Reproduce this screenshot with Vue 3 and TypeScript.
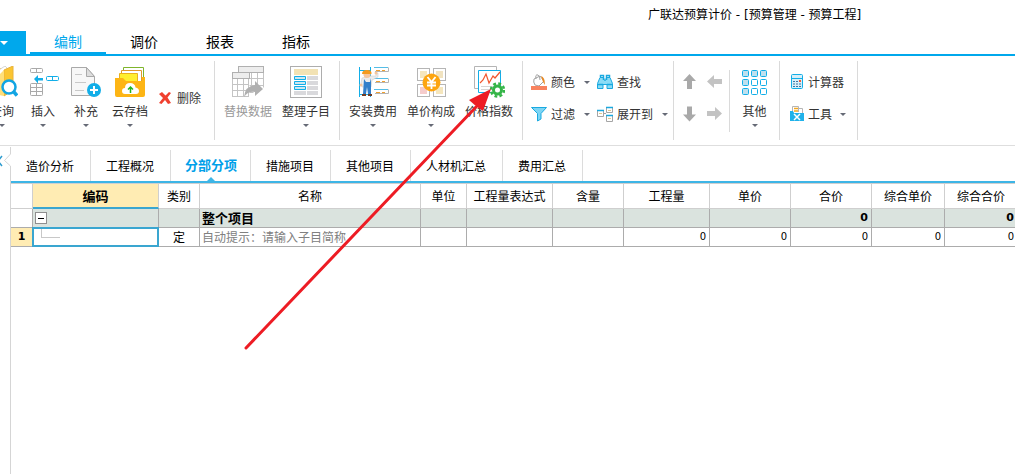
<script setup lang="ts">
import { ref } from 'vue'

interface Column {
  label: string
  width?: number
}

const menus: string[] = ['编制', '调价', '报表', '指标']
const activeMenu = ref('编制')

const sheets: string[] = ['造价分析', '工程概况', '分部分项', '措施项目', '其他项目', '人材机汇总', '费用汇总']
const activeSheet = ref('分部分项')

const columns: Column[] = [
  { label: '编码', width: 126 },
  { label: '类别', width: 41 },
  { label: '名称' },
  { label: '单位', width: 46 },
  { label: '工程量表达式', width: 86 },
  { label: '含量', width: 71 },
  { label: '工程量', width: 86 },
  { label: '单价', width: 81 },
  { label: '合价', width: 81 },
  { label: '综合单价', width: 73 },
  { label: '综合合价', width: 73 },
]

const totals: string[] = ['', '', '', '', '', '0', '', '0']
const amounts: string[] = ['', '', '', '0', '0', '0', '0', '0']
const code = ref('')
</script>

<template>
  <div class="app">
    <header class="titlebar">广联达预算计价 - [预算管理 - 预算工程]</header>

    <nav class="menubar">
      <button class="file" type="button" aria-label="文件"><i class="caret light"></i></button>
      <button
        v-for="m in menus"
        :key="m"
        type="button"
        class="menu"
        :class="{ active: m === activeMenu }"
        @click="activeMenu = m"
      >{{ m }}</button>
    </nav>

    <section class="ribbon">
      <div class="group first">
        <button type="button" class="big w42">
          <svg width="32" height="32" viewBox="0 0 32 32">
            <path d="M10 2h8v27h-8z" fill="#f5c242" />
            <path d="M10 6 19 0l2 2-6 26h-5z" fill="#fff" stroke="#d5d5d5" />
            <path d="M18 4l9-4v24l-9 6z" fill="#fbc531" stroke="#e8b23a" />
            <path d="M12 10l6-6v26l-6-1z" fill="#ffdf7a" />
            <circle cx="23" cy="21" r="6.5" fill="#fff" stroke="#12a5e3" stroke-width="2.5" />
            <path d="M27.500 25.500l3.500 4" stroke="#12a5e3" stroke-width="3.500" />
          </svg>
          <span>查询</span><i class="caret"></i>
        </button>
        <button type="button" class="big w40">
          <svg width="32" height="32" viewBox="0 0 32 32" fill="none">
            <g stroke="#a9a9a9">
              <rect x="3.5" y="2.500" width="12" height="4" rx="1" /><path d="M9.500 2.500v4" />
              <rect x="3.5" y="17.500" width="12" height="12" rx="1" /><path d="M9.500 17.500v12M3.500 21.500h12M3.500 25.500h12" />
            </g>
            <path d="M7 13l4-4v3h5v2.500h-5v3z" fill="#12aee8" />
            <rect x="19.500" y="10.500" width="12" height="4" rx="1" stroke="#12aee8" /><path d="M25.500 10.500v4" stroke="#12aee8" />
          </svg>
          <span>插入</span><i class="caret"></i>
        </button>
        <button type="button" class="big w46">
          <svg width="32" height="32" viewBox="0 0 32 32">
            <path d="M1.500 1.500h15l8 9v19h-23z" fill="#f7f7f7" stroke="#a9a9a9" />
            <path d="M16.500 1.500v9h8z" fill="#ddd" stroke="#a9a9a9" />
            <path d="M5 8.500h7M5 16.500h11M5 24.500h9" stroke="#c8c8c8" />
            <circle cx="24" cy="24" r="7" fill="#12aee8" />
            <path d="M24 20v8M20 24h8" stroke="#fff" stroke-width="2" />
          </svg>
          <span>补充</span><i class="caret"></i>
        </button>
        <button type="button" class="big w42">
          <svg width="32" height="32" viewBox="0 0 32 32">
            <path d="M9.500 16V1.500h20V16z" fill="#fff" stroke="#7fb52c" />
            <path d="M7.500 16V4.500h20V16z" fill="#fff" stroke="#e29a2a" />
            <path d="M5.500 16V7.500h18V16z" fill="#ffef2e" stroke="#e8b11f" />
            <path d="M1 12h8l3 3h16V11h3v18q0 2-2 2H3q-2 0-2-2z" fill="#fdb515" />
            <path d="M11 28q-3 0-3-3t3-3q0-5 5-5t5.500 4.500Q25 22 25 25t-3 3z" fill="#fff" />
            <path d="M16.500 27v-6M14 23.500l2.500-2.500 2.500 2.500" fill="none" stroke="#22b422" stroke-width="1.500" />
          </svg>
          <span>云存档</span><i class="caret"></i>
        </button>
        <button type="button" class="small remove">
          <svg width="12" height="12" viewBox="0 0 12 12">
            <path d="M0 2l3-2 3.500 3.500L10 0l2 1-3.500 4.500L12 11l-3 1-3-4-3.500 4L0 11l4-5z" fill="#f0402f" />
          </svg>
          <span>删除</span>
        </button>
      </div>

      <div class="group pad">
        <button type="button" class="big w58" disabled>
          <svg width="32" height="32" viewBox="0 0 32 32" fill="none">
            <path d="M17.500 12.500h14M17.500 19.500h14M17.500 26.500h4M19.500 6.500v14M25.500 6.500v12M31.500 6.500v15" stroke="#c4c4c4" />
            <rect x="6.500" y=".5" width="25" height="6" fill="#ededed" stroke="#b0b0b0" />
            <rect x=".5" y="12.500" width="16" height="18" fill="#fff" stroke="#c4c4c4" />
            <path d="M5.500 13v17M11.500 13v17M.5 18.500h16M.5 24.500h16" stroke="#c4c4c4" />
            <rect x=".5" y="6.500" width="17" height="6" fill="#ededed" stroke="#b0b0b0" />
            <path d="M12 31q1-11 11-12v-4l8 8-8 7v-4q-7-1-11 5z" fill="#b0b0b0" />
          </svg>
          <span>替换数据</span>
        </button>
        <button type="button" class="big w58">
          <svg width="32" height="32" viewBox="0 0 32 32">
            <rect x=".5" y=".5" width="31" height="31" fill="#fff" stroke="#adadad" />
            <path d="M4 3h24v6H4z" fill="#f2e2b4" />
            <path d="M17 10h11v4H17zM17 15h11v4H17zM17 20h11v4H17zM17 25h11v4H17zM4 25h12v4H4z" fill="#d9d9dc" />
            <path d="M4.500 10.500h11v3h-11zM4.500 15.500h11v3h-11zM4.500 20.500h11v3h-11z" fill="#cde6f0" stroke="#12aee8" />
          </svg>
          <span>整理子目</span><i class="caret"></i>
        </button>
      </div>

      <div class="group pad">
        <button type="button" class="big w58">
          <svg width="32" height="32" viewBox="0 0 32 32" fill="none">
            <path d="M2.500 1v30M13.500 1v30M2.500 4.500h11M2.500 28.500h11" stroke="#12aee8" />
            <path d="M18 5.500h13.500v-4M18 16.500h13.500v-4M18 27.500h13.500v-4" stroke="#b5b5b5" />
            <path d="M17 1.500h14M14 12.500h17M17 23.500h14" stroke="#55bde6" />
            <path d="M19 4.500h4m2 0h3M19 15.500h4m2 0h3M19 26.500h4m2 0h3" stroke="#f0a030" />
            <path d="M5 12l9-2 5 0v-3h2v4l-6 3-1 7H5l-1-4z" fill="#ececec" stroke="#c5c5c5" stroke-width=".5" />
            <circle cx="10" cy="8.500" r="3.500" fill="#f6c59b" />
            <path d="M5 8q0-4 5-4t4.500 4z" fill="#f59a1c" />
            <path d="M7 13l2 3h4l1-4v16h-3l-1-7-1 7H6z" fill="#327fca" />
            <path d="M5 28h4v2H5zM11 28h4v2h-4z" fill="#713b22" />
            <circle cx="4" cy="19" r="1.500" fill="#f6c59b" /><circle cx="19" cy="7" r="1.500" fill="#f6c59b" />
          </svg>
          <span>安装费用</span><i class="caret"></i>
        </button>
        <button type="button" class="big w58">
          <svg width="32" height="32" viewBox="0 0 32 32">
            <g fill="#fff" stroke="#b5b5b5">
              <rect x="2.500" y="2.500" width="12" height="12" /><rect x="18.500" y="2.500" width="12" height="12" />
              <rect x="2.500" y="18.500" width="12" height="12" /><rect x="18.500" y="18.500" width="12" height="12" />
            </g>
            <path d="M5 5h7v7H5zM21 21h7v7h-7z" fill="#f5e6bd" />
            <path d="M21 5h7v7h-7z" fill="#f1e3c0" /><path d="M5 21h7v7H5z" fill="#f5cccc" />
            <circle cx="16.500" cy="16.500" r="9" fill="#fda50f" />
            <path d="M12.500 11l4 5 4-5M16.500 16v7M12 16.500h9M12 19.500h9" fill="none" stroke="#fff" stroke-width="1.800" />
          </svg>
          <span>单价构成</span><i class="caret"></i>
        </button>
        <button type="button" class="big w58">
          <svg width="32" height="32" viewBox="0 0 32 32">
            <path d="M1.500.5h22v22h-22z" fill="#fff" stroke="#b5b5b5" />
            <path d="M5.500 4.500h22v22h-22z" fill="#fff" stroke="#12aee8" />
            <path d="M8 23.500h17M8 20.500h12" stroke="#d5d5d5" />
            <path d="M7 17l3-3 3-6 3 9 4-7 2 2 5-6" fill="none" stroke="#f2552c" stroke-width="1.200" />
            <circle cx="24.500" cy="24" r="6.500" fill="none" stroke="#35b548" stroke-width="2.500" stroke-dasharray="2.800 2.300" />
            <circle cx="24.500" cy="24" r="4" fill="#fff" stroke="#35b548" stroke-width="3" />
          </svg>
          <span>价格指数</span>
        </button>
      </div>

      <div class="group tools">
        <button type="button" class="small">
          <svg width="16" height="16" viewBox="0 0 16 16">
            <path d="M3 5l6-3 4 5-5 5-4-1q-2-3-1-6z" fill="#fff" stroke="#a2a2a2" /><path d="M5 5q-1-5 2-4 2 1 2 5" fill="none" stroke="#a2a2a2" />
            <path d="M10 2q4 1 4 9l-2-3z" fill="#e88a24" />
            <path d="M0 12h16v4H0z" fill="#f8825e" />
          </svg>
          <span>颜色</span><i class="caret"></i>
        </button>
        <button type="button" class="small">
          <svg width="16" height="16" viewBox="0 0 16 16">
            <path d="M.5 9.500l2.500-6h3.500l1 3h1l1-3H13l2.500 6v5h-5.500v-4H6v4H.5z" fill="#8bdcf6" stroke="#19a9e0" />
            <path d="M3.500 3V1.500h3V6M9.500 6V1.500h3V3M1 10.500h5M10 10.500h5" fill="none" stroke="#19a9e0" stroke-width="1.500" />
          </svg>
          <span>查找</span>
        </button>
        <button type="button" class="small">
          <svg width="16" height="16" viewBox="0 0 16 16">
            <path d="M.5 1.500h15l-5.500 6v5.500l-3.500 2V7.500z" fill="#7dd5f4" stroke="#19a9e0" />
          </svg>
          <span>过滤</span><i class="caret"></i>
        </button>
        <button type="button" class="small">
          <svg width="16" height="16" viewBox="0 0 16 16" fill="#fff">
            <path d="M.5 4.500h6v6h-6zM9.500 1.500h6v5h-6zM9.500 9.500h6v6h-6z" stroke="#a5a5a5" />
            <path d="M0 4.500h7M9 1.500h7M9 9.500h7" stroke="#19a9e0" stroke-width="1.500" />
            <path d="M2 7.500h3M11 4.500h3M11 12.500h3" stroke="#e2c98c" /><path d="M7 7.500h2" stroke="#a5a5a5" />
          </svg>
          <span>展开到</span><i class="caret"></i>
        </button>
      </div>

      <div class="group arrows short">
        <button type="button" aria-label="上移"><svg width="15" height="16" viewBox="0 0 15 16"><path d="M7.500 0l6.500 7h-4v8H5V7H1z" fill="#a9a9a9" /></svg></button>
        <button type="button" aria-label="升级"><svg width="15" height="16" viewBox="0 0 15 16"><path d="M0 7.500L7 1v4h8v5H7v4z" fill="#c3c3c3" /></svg></button>
        <button type="button" aria-label="下移"><svg width="15" height="16" viewBox="0 0 15 16"><path d="M7.500 15.500l6.500-7h-4v-8H5v8H1z" fill="#a9a9a9" /></svg></button>
        <button type="button" aria-label="降级"><svg width="15" height="16" viewBox="0 0 15 16"><path d="M15 7.500L8 1v4H0v5h8v4z" fill="#c3c3c3" /></svg></button>
      </div>

      <div class="group">
        <button type="button" class="big w49">
          <svg width="32" height="32" viewBox="0 0 32 32" fill="#fff" stroke="#12aee8">
            <g fill="#bfe0ee">
              <rect x="3.500" y="4.500" width="6" height="6" rx="1" /><rect x="12.500" y="4.500" width="6" height="6" rx="1" /><rect x="21.500" y="4.500" width="6" height="6" rx="1" />
              <rect x="3.500" y="13.500" width="6" height="6" rx="1" /><rect x="3.500" y="22.500" width="6" height="6" rx="1" />
            </g>
            <rect x="12.500" y="13.500" width="6" height="6" rx="1" /><rect x="21.500" y="13.500" width="6" height="6" rx="1" />
            <rect x="12.500" y="22.500" width="6" height="6" rx="1" /><rect x="21.500" y="22.500" width="6" height="6" rx="1" />
          </svg>
          <span>其他</span><i class="caret"></i>
        </button>
      </div>

      <div class="group stack">
        <button type="button" class="small">
          <svg width="16" height="16" viewBox="0 0 16 16">
            <rect x="2.500" y=".5" width="11" height="14" rx="1" fill="#d7eff8" stroke="#12aee8" />
            <path d="M3 4.500h10" stroke="#12aee8" />
            <path d="M4 7.500h2m1 0h2M4 10h2m1 0h2m1 0h2M4 12.500h2m1 0h2m1 0h2" stroke="#3c75a8" /><path d="M10 7h2" stroke="#ef5a3a" stroke-width="2" />
          </svg>
          <span>计算器</span>
        </button>
        <button type="button" class="small">
          <svg width="16" height="16" viewBox="0 0 16 16">
            <path d="M3.500 6V.5h6V6M9.500 2.500h4V7" fill="#fff" stroke="#b5b5b5" />
            <path d="M5 2.500h4M5 5h4" stroke="#f5a81c" stroke-width="1.500" />
            <path d="M1 5h3l1 2h10v8H1z" fill="#20b2ea" />
            <path d="M5 8l6 6M11 8l-6 6" stroke="#fff" stroke-width="1.500" />
          </svg>
          <span>工具</span><i class="caret"></i>
        </button>
      </div>
    </section>

    <main class="work">
      <aside class="gutter">
        <svg width="11" height="26" viewBox="0 0 11 26" fill="none">
          <path d="M10.500 1v7L4.500 14.500l6 5.500v6" stroke="#d5d5d5" />
          <path d="M-2 15l4-5M-2 15l4 5" stroke="#2d9ccf" stroke-width="1.500" />
        </svg>
        <div class="rail"></div>
      </aside>

      <div class="content">
        <div class="sheets" role="tablist">
          <button
            v-for="s in sheets"
            :key="s"
            type="button"
            role="tab"
            :aria-selected="s === activeSheet"
            :class="{ active: s === activeSheet }"
            @click="activeSheet = s"
          >{{ s }}</button>
        </div>

        <table>
          <colgroup>
            <col class="index" />
            <col v-for="c in columns" :key="c.label" :style="c.width ? { width: c.width + 'px' } : {}" />
          </colgroup>
          <thead>
            <tr>
              <th></th>
              <th v-for="(c, i) in columns" :key="c.label" :class="{ current: i === 0 }">{{ c.label }}</th>
            </tr>
          </thead>
          <tbody>
            <tr class="total">
              <td class="blank"></td>
              <td><button type="button" class="fold" aria-label="折叠"></button></td>
              <td></td>
              <td class="name">整个项目</td>
              <td v-for="(v, i) in totals" :key="i" class="num">{{ v }}</td>
            </tr>
            <tr>
              <td class="rownum">1</td>
              <td class="edit">
                <input v-model="code" type="text" aria-label="编码" />
                <i class="branch"></i>
              </td>
              <td class="kind">定</td>
              <td class="name hint">自动提示：请输入子目简称</td>
              <td v-for="(v, i) in amounts" :key="i" class="num">{{ v }}</td>
            </tr>
          </tbody>
        </table>
      </div>
    </main>

    <svg class="pointer" width="260" height="270" viewBox="0 0 260 270" aria-hidden="true">
      <path d="M6 268L236 27" stroke="#ed1c24" stroke-width="3" stroke-linecap="round" />
      <path d="M251 9L243 31 237 27 229 20z" fill="#ed1c24" />
    </svg>
  </div>
</template>

<style>
body {
  margin: 0;
  background: #fff;
}
</style>

<style scoped>
.app {
  position: relative;
  display: flex;
  flex-direction: column;
  min-height: 100vh;
  overflow: hidden;
  background: #fff;
  color: #000;
  font: 12px/16px "Noto Sans CJK SC", sans-serif;
}
button {
  padding: 0;
  border: 0;
  background: none;
  color: inherit;
  font: inherit;
  white-space: nowrap;
}
svg {
  display: block;
  flex: none;
}
.titlebar {
  height: 31px;
  padding-left: 648px;
  box-sizing: border-box;
  font-family: "DejaVu Sans", "Noto Sans CJK SC", sans-serif;
  line-height: 30px;
  white-space: nowrap;
}
.menubar {
  display: flex;
  height: 23px;
  border-bottom: 2px solid #00a8ec;
}
.file {
  display: flex;
  justify-content: flex-start;
  align-items: center;
  width: 26px;
  margin-right: 4px;
  background: #00a8ec;
}
.menu {
  width: 76px;
  padding-bottom: 2px;
  border-bottom: 2px solid transparent;
  font-size: 14px;
  line-height: 18px;
}
.menu.active {
  border-color: #00a8ec;
  color: #00a8ec;
}
.caret {
  flex: none;
  width: 0;
  border: 3px solid transparent;
  border-top-color: #666a76;
  border-bottom: 0;
}
.caret.light {
  border-width: 4px;
  border-bottom: 0;
  border-top-color: #fff;
}
.ribbon {
  display: flex;
  height: 89px;
  border-bottom: 1px solid #dedede;
  color: #333;
}
.group {
  display: flex;
  align-items: flex-start;
  flex: none;
  height: 79px;
  margin-top: 5px;
  box-sizing: border-box;
  border-right: 1px solid #dadada;
}
.first {
  width: 234px;
  margin-left: -19px;
}
.pad {
  padding: 0 4px;
}
.big {
  display: flex;
  flex-direction: column;
  align-items: center;
  gap: 5px;
  padding-top: 5px;
}
.big:disabled {
  color: #999;
}
.w40 { width: 40px; }
.w42 { width: 42px; }
.w46 { width: 46px; }
.w49 { width: 49px; }
.w58 { width: 58px; }
.small {
  display: flex;
  align-items: center;
  gap: 4px;
}
.small .caret {
  margin-left: 4px;
}
.remove {
  gap: 6px;
  margin: 29px 0 0 8px;
}
.tools {
  display: grid;
  grid-template-columns: 66px 76px;
  grid-auto-rows: 32px;
  padding: 5px 0 0 8px;
}
.tools .small,
.stack .small {
  height: 32px;
}
.short {
  height: 62px;
  margin-top: 14px;
}
.arrows {
  display: grid;
  grid-template-columns: 15px 15px;
  align-content: start;
  gap: 16px 10px;
  width: 56px;
  padding: 4px 8px 0;
}
.stack {
  flex-direction: column;
  width: 78px;
  padding: 5px 0 0 9px;
}
.stack .small {
  gap: 3px;
}
.tools .small .caret,
.stack .small .caret {
  margin-left: 5px;
}
.work {
  display: flex;
  flex: 1;
}
.gutter {
  display: flex;
  flex-direction: column;
  width: 11px;
}
.rail {
  flex: 1;
  border-right: 1px solid #d5d5d5;
}
.content {
  flex: 1;
  min-width: 0;
  overflow: hidden;
}
.sheets {
  display: flex;
  height: 31px;
  padding-top: 4px;
  border-bottom: 2px solid #3db5e6;
}
.sheets button {
  position: relative;
  padding: 0 16px 0 15px;
  border-right: 1px solid #dcdcdc;
}
.sheets button.active {
  padding: 0 13px 2px 14px;
  color: #00a0e9;
  font-size: 13px;
  font-weight: 700;
}
.sheets button.active::after {
  content: "";
  position: absolute;
  left: 50%;
  bottom: 0;
  margin-left: -4px;
  border: 4px solid transparent;
  border-top: 0;
  border-bottom-color: #3db5e6;
}
table {
  width: calc(100% + 3px);
  table-layout: fixed;
  border-collapse: separate;
  border-spacing: 0;
}
.index {
  width: 22px;
}
th,
td {
  box-sizing: border-box;
  padding: 0;
  border-right: 1px solid #acacac;
  border-bottom: 1px solid #acacac;
  white-space: nowrap;
}
th {
  height: 26px;
  border-color: #cfcfcf;
  border-top: 1px solid #cfcfcf;
  font-weight: 400;
}
th.current {
  border-bottom: 2px solid #3aa6d0;
  background: #ffecb3;
  font-size: 13px;
  font-weight: 700;
}
td {
  height: 19px;
  line-height: 18px;
}
.total {
  background: #dae3de;
  font-weight: 700;
}
.total .blank {
  background: #fff;
}
.name {
  padding-left: 2px;
}
.total .name {
  font-size: 13px;
}
.hint {
  color: #808080;
}
.kind {
  text-align: center;
}
.num {
  padding-right: 3px;
  font-family: "DejaVu Sans", sans-serif;
  font-size: 10px;
  text-align: right;
}
.total .num {
  font-size: 11px;
}
.rownum {
  background: #ffecb3;
  font-family: "DejaVu Sans", sans-serif;
  font-size: 11px;
  font-weight: 700;
  text-align: center;
}
.fold {
  display: block;
  position: relative;
  width: 12px;
  height: 12px;
  margin: 0 0 0 2px;
  border: 1px solid #8f8f8f;
  background: #fff;
}
.fold::after {
  content: "";
  position: absolute;
  top: 5px;
  left: 2px;
  width: 6px;
  height: 1px;
  background: #000;
}
.edit {
  position: relative;
}
.edit input {
  position: absolute;
  inset: -1px;
  width: calc(100% + 2px);
  height: calc(100% + 2px);
  box-sizing: border-box;
  padding: 0 0 0 30px;
  border: 2px solid #3aa6d0;
  border-radius: 0;
  background: #fff;
  font: inherit;
  outline: 0;
}
.branch {
  position: absolute;
  top: 1px;
  left: 8px;
  width: 18px;
  height: 8px;
  border-left: 1px solid #c8c8c8;
  border-bottom: 1px solid #c8c8c8;
}
.pointer {
  position: absolute;
  top: 80px;
  left: 240px;
  pointer-events: none;
}
</style>
